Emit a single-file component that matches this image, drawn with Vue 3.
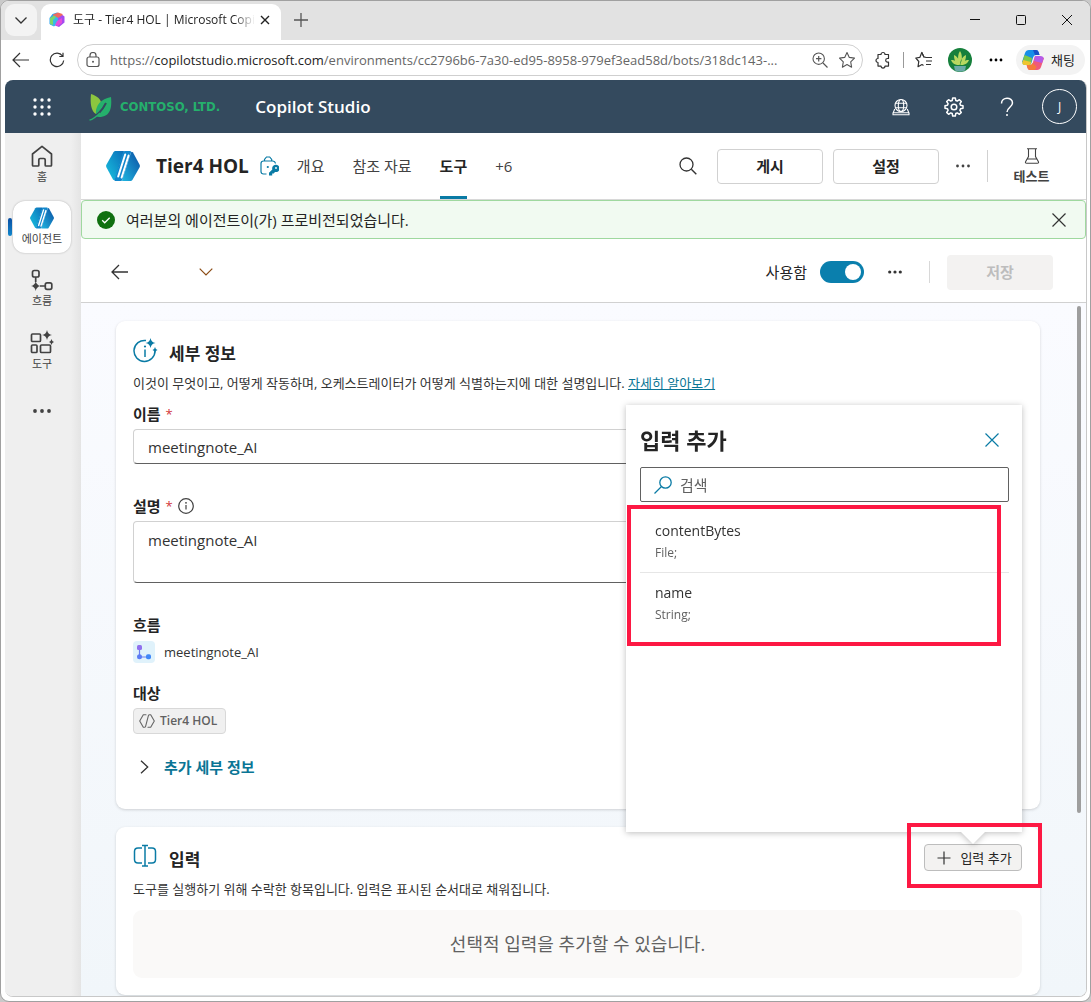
<script setup>
import { ref } from 'vue'

const name = ref('meetingnote_AI')
const description = ref('meetingnote_AI')
const enabled = ref(true)
const query = ref('')

const tabs = [
  { label: '개요' },
  { label: '참조 자료' },
  { label: '도구', active: true },
  { label: '+6' },
]

const inputs = [
  { name: 'contentBytes', type: 'File;' },
  { name: 'name', type: 'String;' },
]
</script>

<template>
  <div class="window">
    <svg class="defs" width="0" height="0" aria-hidden="true">
      <defs>
        <linearGradient id="agentLeft" x1="0" y1="1" x2="1" y2="0">
          <stop offset="0" stop-color="#19c3e0" />
          <stop offset="1" stop-color="#0a6cb8" />
        </linearGradient>
        <linearGradient id="agentRight" x1="0" y1="1" x2="1" y2="0">
          <stop offset="0" stop-color="#1fb6e0" />
          <stop offset="1" stop-color="#0a4fa3" />
        </linearGradient>
        <symbol id="agent" viewBox="0 0 34 30">
          <path d="M9.500 0H18L9 28.500Q8.500 30 7 28.500L.500 16.500Q-.3 15 .500 13.500L7.500 1.200Q8.200 0 9.500 0Z" fill="url(#agentLeft)" />
          <path d="M16 30L25 1.500Q25.600 0 27 1.500L33.500 13.500Q34.300 15 33.500 16.500L26.500 28.800Q25.800 30 24.500 30Z" fill="url(#agentRight)" />
          <path d="M18.500 0H24Q25.500 0 25 1.500L16.500 28.500Q16 30 14.500 30H9.500Q8 30 8.600 28.500L17 1.200Z" fill="#1187cc" />
          <path d="M19.200 3.500L12.200 25.500M22.600 4.500L15.600 26.500" stroke="#fff" stroke-width="2" stroke-linecap="round" fill="none" />
        </symbol>
      </defs>
    </svg>

    <div class="tabstrip">
      <button class="tab-menu" aria-label="탭 작업 메뉴">
        <svg width="14" height="14" viewBox="0 0 14 14"><path d="M1.500 4.500L7 10l5.500-5.500" fill="none" stroke="#333" stroke-width="1.300" /></svg>
      </button>
      <div class="tab">
        <svg width="16" height="16" viewBox="0 0 16 16">
          <path d="M3.500 2L8 .5l3 1.500v7L5 14l-4.500-2V6z" fill="#2fa4f0" />
          <path d="M4 2.500L9 .5l4.500 1.500v5L9 9 4 6z" fill="#f06a60" />
          <path d="M1 6l4-2.500L9 6v5l-4 3.500-4-2z" fill="#39b8e8" />
          <path d="M1 6l4-2.500 2 1.500-3 3v5L1 12z" fill="#7cd66b" />
          <path d="M9 6l4.500-3 2 1.500v6L10 15l-4-1.500 3-3z" fill="#a44bf0" />
          <path d="M8 9l5-3v5l-4 3-3-1z" fill="#e24ddb" />
        </svg>
        <span class="tab-title">도구 - Tier4 HOL | Microsoft Copilot</span>
        <button class="tab-close" aria-label="탭 닫기">
          <svg width="10" height="10" viewBox="0 0 10 10"><path d="M1 1l8 8M9 1L1 9" stroke="#222" stroke-width="1.400" /></svg>
        </button>
      </div>
      <button class="new-tab" aria-label="새 탭">
        <svg width="16" height="16" viewBox="0 0 16 16"><path d="M8 1v14M1 8h14" stroke="#555" stroke-width="1.300" /></svg>
      </button>
      <div class="win-controls">
        <button aria-label="최소화"><svg width="10" height="10" viewBox="0 0 10 10"><path d="M0 4.500h10" stroke="#111" /></svg></button>
        <button aria-label="최대화"><svg width="10" height="10" viewBox="0 0 10 10"><rect x=".5" y=".5" width="9" height="9" rx="1" fill="none" stroke="#111" /></svg></button>
        <button aria-label="닫기"><svg width="10" height="10" viewBox="0 0 10 10"><path d="M0 0l10 10M10 0L0 10" stroke="#111" /></svg></button>
      </div>
    </div>

    <div class="toolbar">
      <button aria-label="뒤로"><svg width="18" height="16" viewBox="0 0 18 16"><path d="M17 8H1M8 1L1 8l7 7" fill="none" stroke="#333" stroke-width="1.200" /></svg></button>
      <button aria-label="새로 고침"><svg width="16" height="16" viewBox="0 0 16 16"><path d="M13.500 4A6.700 6.700 0 1 0 14.700 8.500M14 .8V4.500H10.300" fill="none" stroke="#333" stroke-width="1.200" /></svg></button>
      <div class="address">
        <svg width="14" height="16" viewBox="0 0 14 16"><rect x="1" y="5" width="12" height="9.500" rx="2" fill="none" stroke="#555" stroke-width="1.200" /><path d="M4 5V3.500a3 3 0 0 1 6 0V5" fill="none" stroke="#555" stroke-width="1.200" /><circle cx="7" cy="9.800" r="1" fill="#555" /></svg>
        <span class="url"><span>https://</span><b>copilotstudio.microsoft.com</b><span>/environments/cc2796b6-7a30-ed95-8958-979ef3ead58d/bots/318dc143-...</span></span>
        <svg width="16" height="16" viewBox="0 0 16 16"><circle cx="6.700" cy="6.700" r="5.700" fill="none" stroke="#555" stroke-width="1.100" /><path d="M11 11l4.500 4.500M4 6.700h5.400M6.700 4v5.400" stroke="#555" stroke-width="1.200" /></svg>
        <svg width="18" height="18" viewBox="0 0 18 18"><path d="M9 1.500l2.300 4.900 5.200.7-3.800 3.700.9 5.400L9 13.600l-4.600 2.600.9-5.400L1.500 7.100l5.200-.7z" fill="none" stroke="#555" stroke-width="1.100" stroke-linejoin="round" /></svg>
      </div>
      <button class="puzzle" aria-label="확장"><svg width="16" height="18" viewBox="0 0 16 18"><path d="M3 3.500h3a2 2 0 0 1 4 0h3.500v4h-1a1.800 1.800 0 0 0 0 3.600h1v4H10a2 2 0 0 1-4 0H3V11.500a2 2 0 0 1 0-4z" fill="none" stroke="#333" stroke-width="1.200" stroke-linejoin="round" /></svg></button>
      <i class="bar-divider"></i>
      <button class="favs" aria-label="즐겨찾기"><svg width="18" height="18" viewBox="0 0 18 18"><path d="M11 6.400L9 6l-2.200-4.500L4.800 6.400.8 7l3 3.500-.8 5.200 4-2.200 1.500 1" fill="none" stroke="#333" stroke-width="1.200" stroke-linejoin="round" /><path d="M6.800 1.500L9 6.300M11 6.500h6M11 10h6M11 13.500h5" stroke="#333" stroke-width="1.200" /></svg></button>
      <svg class="profile" width="24" height="24" viewBox="0 0 24 24"><circle cx="12" cy="12" r="12" fill="#16803c" /><path d="M12 17C9 11 10 6 12 3c2 3 3 8 0 14zM12 17C7 15 6 11 6 7c4 2 6 6 6 10zM12 17c5-2 6-6 6-10-4 2-6 6-6 10zM11 17c-4 0-7-2-8-5 4 0 7 2 8 5zM13 17c4 0 7-2 8-5-4 0-7 2-8 5z" fill="#b7d860" /><path d="M6 18h12l-1 4.500a12 12 0 0 1-10 0z" fill="#6aaaa8" /></svg>
      <button class="more" aria-label="설정 및 기타"><svg width="14" height="4" viewBox="0 0 14 4"><circle cx="2" cy="2" r="1.400" /><circle cx="7" cy="2" r="1.400" /><circle cx="12" cy="2" r="1.400" /></svg></button>
      <button class="chat">
        <svg width="22" height="20" viewBox="0 0 22 20">
          <path d="M7 0h7q2 0 2.600 2L17.500 5H14q-2 0-2.700 2L9 14H5L0 12 3 3Q4 0 7 0z" fill="#168fe8" />
          <path d="M2.500 5L10 8 9 14q-.5 1-2 1H3Q0 15 .5 12z" fill="#7cc84a" />
          <path d="M1 10l8 2-.5 2q-.5 1-2 1H3q-3 0-2.500-3z" fill="#efc52f" />
          <path d="M15 20H8q-2 0-2.500-2L4.500 15H8q2 0 2.700-2L13 6h4l5 2-3 9q-1 3-4 3z" fill="#f0597a" />
          <path d="M13 6h5q4 0 3.500 3L20 13l-8-2z" fill="#b55be8" />
          <path d="M5 15h3q2 0 2.700-2l4 4-2 3H8q-2 0-2.500-2z" fill="#f47a3c" />
          <path d="M11 0h3q2 0 2.600 2L17.500 5H13z" fill="#1850c8" />
        </svg>
        채팅
      </button>
    </div>

    <div class="app">
      <header class="suite">
        <button class="waffle" aria-label="앱 시작 관리자">
          <svg width="18" height="18" viewBox="0 0 18 18" fill="#fff"><g v-for="r in 3" :key="r"><circle v-for="c in 3" :key="c" :cx="c * 7 - 5" :cy="r * 7 - 5" r="1.700" /></g></svg>
        </button>
        <a href="#" class="brand">
          <svg width="23" height="28" viewBox="0 0 23 28"><path d="M2 1c6 2 10 5 10 9-3 3-5 6-5 11C2 18 1 10 2 1z" fill="#8cc63f" /><path d="M22 4c1 10 0 20-12 20-2 0-3-1-3-2C6 12 12 6 22 4z" fill="#25b06c" /><path d="M17 10C14 16 8 23 .5 27" fill="none" stroke="#344a5e" stroke-width="2" /><path d="M11 20C8 23 5 26 .5 27.200" fill="none" stroke="#25b06c" stroke-width="1.300" /></svg>
          <span>CONTOSO, LTD.</span>
        </a>
        <h1>Copilot Studio</h1>
        <nav class="suite-actions">
          <button aria-label="환경"><svg width="18" height="18" viewBox="0 0 18 18" fill="none" stroke="#fff" stroke-width="1.100"><circle cx="9" cy="7.500" r="6" /><ellipse cx="9" cy="7.500" rx="2.700" ry="6" /><path d="M3.500 5.300h11M3.500 9.700h11" /><path d="M2.800 11L1 15v1.800h16V15l-1.800-4M1 14.800h16" /></svg></button>
          <button aria-label="설정"><svg width="20" height="20" viewBox="0 0 20 20" fill="none" stroke="#fff" stroke-width="1.500" stroke-linejoin="round"><path d="M8.700 1h2.600l.5 2.500 1.500.6 2.100-1.400 1.900 1.900-1.400 2.100.6 1.500 2.500.5v2.600l-2.500.5-.6 1.500 1.400 2.100-1.900 1.900-2.100-1.400-1.500.6-.5 2.500H8.700l-.5-2.500-1.500-.6-2.100 1.400-1.900-1.900 1.400-2.100-.6-1.500L1 11.300V8.700l2.500-.5.6-1.500-1.400-2.100 1.900-1.900 2.100 1.400 1.500-.6z" /><circle cx="10" cy="10" r="2.800" /></svg></button>
          <button aria-label="도움말"><svg width="14" height="20" viewBox="0 0 14 20" fill="none" stroke="#fff" stroke-width="1.500"><path d="M1.500 6.500C1.500-.5 12.500-.5 12.500 6c0 4-5.500 4.500-5.500 9M7 17v2" /></svg></button>
          <button class="avatar">J</button>
        </nav>
      </header>

      <div class="body">
        <nav class="rail">
          <a href="#" class="rail-item">
            <svg width="22" height="22" viewBox="0 0 22 22"><path d="M1.500 9L11 1.300 20.500 9v11.200q0 .8-.8.8H15q-.8 0-.8-.8v-5.400q0-1.300-1.300-1.300H9.100q-1.300 0-1.300 1.300v5.400q0 .8-.8.8H2.300q-.8 0-.8-.8z" fill="none" stroke="#424242" stroke-width="1.700" stroke-linejoin="round" /></svg>
            <span>홈</span>
          </a>
          <a href="#" class="rail-item current">
            <svg width="24" height="22"><use href="#agent" /></svg>
            <span>에이전트</span>
          </a>
          <a href="#" class="rail-item">
            <svg width="22" height="22" viewBox="0 0 22 22"><g fill="none" stroke="#424242" stroke-width="1.700"><rect x="1.500" y="1.500" width="6.500" height="6.500" rx="1.800" /><rect x="14.300" y="13.800" width="6.500" height="6.500" rx="1.800" /><path d="M4.700 8v5M9 17h5" /></g><path d="M4.700 12q.8 4.200 4.800 5-4 .8-4.800 5Q4 17.800 0 17q4-.8 4.700-5z" fill="#424242" /></svg>
            <span>흐름</span>
          </a>
          <a href="#" class="rail-item">
            <svg width="24" height="24" viewBox="0 0 24 24"><g fill="none" stroke="#424242" stroke-width="1.700"><rect x="1.500" y="4" width="9" height="7.500" rx="1" /><rect x="1.500" y="15" width="5.500" height="7.500" rx="1" /><rect x="10.500" y="15" width="10" height="7.500" rx="1" /></g><path d="M17 0q.8 4.500 5 5-4.200.6-5 5-.8-4.400-5-5 4.200-.5 5-5zM21.500 9q.5 2.500 2.500 3-2 .5-2.500 3-.5-2.500-2.500-3 2-.5 2.500-3z" fill="#424242" /></svg>
            <span>도구</span>
          </a>
          <button class="rail-more" aria-label="더 보기"><svg width="18" height="4" viewBox="0 0 18 4" fill="#424242"><circle cx="2" cy="2" r="1.900" /><circle cx="9" cy="2" r="1.900" /><circle cx="16" cy="2" r="1.900" /></svg></button>
        </nav>

        <main class="main">
          <div class="agent-bar">
            <svg width="34" height="30"><use href="#agent" /></svg>
            <h2>Tier4 HOL</h2>
            <svg class="lock" width="19" height="20" viewBox="0 0 19 20"><path d="M6.500 18H3.500Q1 18 1 15.500v-8Q1 5 3.500 5h9Q15 5 15.500 7.500M4.500 5V3.500L6.500 1h3.200l2 2.500V5" fill="none" stroke="#0a7ba5" stroke-width="1.200" /><circle cx="7.800" cy="11" r="1.100" fill="#0a7ba5" /><path d="M9 19.500v-2.800l3.300-3.300a3.700 3.700 0 1 1 2.700 2.600l-1.300 1.400-1.500.1v2z" fill="#0a7ba5" /><circle cx="16" cy="12" r=".9" fill="#fff" /></svg>
            <nav class="tabs">
              <a v-for="t in tabs" :key="t.label" href="#" :class="{ active: t.active }">{{ t.label }}</a>
            </nav>
            <div class="agent-actions">
              <button class="find" aria-label="검색"><svg width="18" height="18" viewBox="0 0 18 18"><circle cx="7.500" cy="7.500" r="6.500" fill="none" stroke="#333" stroke-width="1.300" /><path d="M12.300 12.300l5 5" stroke="#333" stroke-width="1.400" /></svg></button>
              <button class="outlined">게시</button>
              <button class="outlined">설정</button>
              <button class="dots" aria-label="더 보기"><svg width="14" height="4" viewBox="0 0 14 4" fill="#424242"><circle cx="1.500" cy="2" r="1.400" /><circle cx="7" cy="2" r="1.400" /><circle cx="12.500" cy="2" r="1.400" /></svg></button>
              <button class="test">
                <svg width="16" height="16" viewBox="0 0 16 16"><path d="M3 .7h10M4.500 1v7.500L1.700 13.500q-.9 1.800 1 1.800h10.600q1.900 0 1-1.800L11.500 8.500V1M3.500 11h9" fill="none" stroke="#424242" stroke-width="1.100" /></svg>
                <span>테스트</span>
              </button>
            </div>
          </div>

          <div class="banner" role="status">
            <svg width="18" height="18" viewBox="0 0 18 18"><circle cx="9" cy="9" r="9" fill="#107010" /><path d="M5.200 9.300l2.500 2.500 5-5" fill="none" stroke="#fff" stroke-width="1.300" /></svg>
            <span>여러분의 에이전트이(가) 프로비전되었습니다.</span>
            <button aria-label="닫기"><svg width="14" height="14" viewBox="0 0 14 14"><path d="M.5.5l13 13M13.500.5l-13 13" stroke="#333" stroke-width="1.200" /></svg></button>
          </div>

          <div class="tool-bar">
            <button aria-label="뒤로"><svg width="17" height="16" viewBox="0 0 17 16"><path d="M17 8H1M8 1L1 8l7 7" fill="none" stroke="#333" stroke-width="1.300" /></svg></button>
            <button class="picker" aria-label="도구 선택"><svg width="14" height="8" viewBox="0 0 14 8"><path d="M.7.7L7 7 13.300.7" fill="none" stroke="#8a4b14" stroke-width="1.200" /></svg></button>
            <label class="switch">사용함<input v-model="enabled" type="checkbox" role="switch" /></label>
            <button class="tool-dots" aria-label="더 보기"><svg width="14" height="4" viewBox="0 0 14 4" fill="#333"><circle cx="1.700" cy="2" r="1.600" /><circle cx="7" cy="2" r="1.600" /><circle cx="12.300" cy="2" r="1.600" /></svg></button>
            <i class="tool-divider"></i>
            <button class="save" disabled>저장</button>
          </div>

          <div class="content">
            <section class="card">
              <div class="card-head">
                <svg width="25" height="25" viewBox="0 0 25 25"><path d="M13 2.500A10.500 10.500 0 1 0 22 12.500" fill="none" stroke="#0a7ba5" stroke-width="1.500" /><path d="M12 11.500v7.500" stroke="#0a7ba5" stroke-width="1.500" /><circle cx="12" cy="8.500" r="1.100" fill="#0a7ba5" /><path d="M17.500 0q.8 4.500 5 5-4.200.6-5 5-.8-4.400-5-5 4.200-.5 5-5zM22 9q.5 2.500 2.500 3-2 .5-2.500 3-.5-2.500-2.500-3 2-.5 2.500-3z" fill="#0a7ba5" /></svg>
                <h3>세부 정보</h3>
              </div>
              <p class="desc">이것이 무엇이고, 어떻게 작동하며, 오케스트레이터가 어떻게 식별하는지에 대한 설명입니다. <a href="#">자세히 알아보기</a></p>

              <label class="label" for="tool-name">이름 <em>*</em></label>
              <input id="tool-name" v-model="name" class="field" type="text" />

              <label class="label gap-l" for="tool-desc">설명 <em>*</em>
                <svg width="16" height="16" viewBox="0 0 16 16"><circle cx="8" cy="8" r="7.300" fill="none" stroke="#424242" stroke-width="1.200" /><path d="M8 7v4.500" stroke="#424242" stroke-width="1.200" /><circle cx="8" cy="4.800" r=".9" fill="#424242" /></svg>
              </label>
              <textarea id="tool-desc" v-model="description" class="field area"></textarea>

              <h4 class="label gap-l">흐름</h4>
              <div class="flow">
                <svg width="22" height="22" viewBox="0 0 22 22"><rect width="22" height="22" rx="4" fill="#e0f2fb" /><path d="M6.500 6v10H16" fill="none" stroke="#6b7cf0" stroke-width="1.200" /><rect x="4" y="4" width="5" height="5" rx="1.500" fill="#9070ee" /><circle cx="6.500" cy="15.700" r="2.500" fill="#5b7cf5" /><rect x="13" y="13.200" width="5" height="5" rx="1.800" fill="#4088f8" /></svg>
                <span>meetingnote_AI</span>
              </div>

              <h4 class="label gap-m">대상</h4>
              <span class="tag">
                <svg width="16" height="14" viewBox="0 0 16 14" fill="none" stroke="#666" stroke-width="1.100" stroke-linejoin="round" stroke-linecap="round"><path d="M7 .7H4.300L.7 7l3.600 6.300H5.500Q6.300 13.300 6.600 12.300L9.400 1.700Q9.700.7 10.500.7H11.700L15.300 7l-3.600 6.300H9" /></svg>
                Tier4 HOL
              </span>

              <button class="disclosure">
                <svg width="9" height="14" viewBox="0 0 9 14"><path d="M1 .7L7.700 7 1 13.300" fill="none" stroke="#333" stroke-width="1.300" /></svg>
                추가 세부 정보
              </button>
            </section>

            <section class="card inputs">
              <div class="card-head">
                <svg width="25" height="24" viewBox="0 0 25 24" fill="none" stroke="#0a7ba5" stroke-width="1.500"><path d="M9 4H5Q1.500 4 1.500 7.500v8Q1.500 19 5 19h4M15 4h4q3.500 0 3.500 3.500v8Q22.500 19 19 19h-4M12 1.500v20.500M9 1.500h6M9 22h6" /></svg>
                <h3>입력</h3>
                <div class="add-wrap">
                  <button class="add">
                    <svg width="14" height="14" viewBox="0 0 14 14"><path d="M7 .5v13M.5 7h13" stroke="#333" stroke-width="1.200" /></svg>
                    입력 추가
                  </button>
                  <div class="callout" role="dialog" aria-labelledby="callout-title">
                    <div class="callout-head">
                      <h3 id="callout-title">입력 추가</h3>
                      <button aria-label="닫기"><svg width="14" height="14" viewBox="0 0 14 14"><path d="M.5.5l13 13M13.500.5l-13 13" stroke="#0a7ba5" stroke-width="1.200" /></svg></button>
                    </div>
                    <div class="search">
                      <svg width="18" height="18" viewBox="0 0 18 18"><circle cx="11.500" cy="6.500" r="5.700" fill="none" stroke="#0a7ba5" stroke-width="1.300" /><path d="M7.500 10.500L.5 17.500" stroke="#0a7ba5" stroke-width="1.300" /></svg>
                      <input v-model="query" type="text" placeholder="검색" aria-label="검색" />
                    </div>
                    <ul>
                      <li v-for="i in inputs" :key="i.name">
                        <button><strong>{{ i.name }}</strong><small>{{ i.type }}</small></button>
                      </li>
                    </ul>
                    <div class="mark list-mark"></div>
                  </div>
                  <div class="mark add-mark"></div>
                </div>
              </div>
              <p class="desc">도구를 실행하기 위해 수락한 항목입니다. 입력은 표시된 순서대로 채워집니다.</p>
              <div class="empty">선택적 입력을 추가할 수 있습니다.</div>
            </section>
            <div class="thumb"></div>
          </div>
        </main>
      </div>
    </div>
  </div>
</template>

<style>
body {
  background: #c9c9c9;
}
</style>

<style scoped>
* {
  box-sizing: border-box;
}
.window {
  display: flex;
  flex-direction: column;
  min-height: 100vh;
  border: 1px solid #a0a0a0;
  border-radius: 9px;
  background: #fff;
  color: #242424;
  font: 15px/20px "Open Sans", "Noto Sans CJK KR", sans-serif;
  overflow: hidden;
}
.defs {
  position: absolute;
}
svg {
  display: block;
  flex: none;
}
h1, h2, h3, h4, p, ul {
  margin: 0;
  padding: 0;
  font-weight: 600;
}
button {
  display: flex;
  align-items: center;
  justify-content: center;
  flex: none;
  margin: 0;
  padding: 0;
  border: 0;
  background: none;
  color: inherit;
  font: inherit;
}
a {
  color: inherit;
  text-decoration: none;
}

/* browser chrome */
.tabstrip {
  display: flex;
  align-items: flex-start;
  height: 39px;
  padding: 3px 0 0 4px;
  background: #e2e2e2;
}
.tab-menu {
  width: 32px;
  height: 32px;
  border-radius: 9px;
  background: #f3f3f3;
}
.tab {
  display: flex;
  align-items: center;
  width: 240px;
  height: 36px;
  margin-left: 4px;
  padding: 0 7px 4px 8px;
  border-radius: 9px 9px 0 0;
  background: #fff;
}
.tab-title {
  flex: 1;
  margin-left: 8px;
  overflow: hidden;
  white-space: nowrap;
  font-size: 12px;
  mask-image: linear-gradient(to left, transparent 1px, #000 22px);
}
.tab-close {
  width: 18px;
  height: 18px;
}
.new-tab {
  width: 40px;
  height: 32px;
}
.win-controls {
  display: flex;
  margin-left: auto;
}
.win-controls button {
  width: 46px;
  height: 32px;
}
.toolbar {
  display: flex;
  align-items: center;
  height: 40px;
  padding: 0 5px 0 2px;
}
.toolbar > button:not(.chat) {
  width: 36px;
  height: 32px;
}
.address {
  display: flex;
  align-items: center;
  gap: 10px;
  flex: 1;
  min-width: 0;
  height: 32px;
  margin-left: 2px;
  padding: 0 6px 0 8px;
  border: 1px solid #cfcfcf;
  border-radius: 16px;
}
.url {
  flex: 1;
  overflow: hidden;
  white-space: nowrap;
  color: #666;
  font-size: 13px;
}
.url b {
  color: #222;
  font-weight: 400;
}
.toolbar .puzzle {
  margin-left: 2px;
}
.bar-divider {
  width: 1px;
  height: 16px;
  margin: 0 2px;
  background: #999;
}
.profile {
  margin: 0 6px;
}
.more {
  margin-right: 2px;
}
.chat {
  gap: 7px;
  height: 30px;
  padding: 0 10px 0 6px;
  border-radius: 15px;
  background: #f3f3f3;
  font-size: 13px;
}

/* application shell */
.app {
  display: flex;
  flex-direction: column;
  flex: 1;
  margin: 0 3px 4px 4px;
  border: solid #c8c8c8;
  border-width: 0 1px 1px 0;
  border-radius: 8px;
  overflow: hidden;
}
.suite {
  display: flex;
  align-items: center;
  height: 53px;
  padding: 0 9px 0 19px;
  background: #344a5e;
  color: #fff;
}
.waffle {
  width: 36px;
  height: 36px;
}
.brand {
  display: flex;
  align-items: center;
  gap: 8px;
  margin-left: 29px;
  color: #25b06c;
  font: 700 13px/24px "DejaVu Sans Condensed", "Open Sans", sans-serif;
}
.brand span {
  white-space: nowrap;
}
.suite h1 {
  margin-left: 35px;
  font-size: 17px;
}
.suite-actions {
  display: flex;
  align-items: center;
  margin-left: auto;
}
.suite-actions button {
  width: 53px;
  height: 36px;
}
.suite-actions .avatar {
  width: 35px;
  height: 35px;
  margin-left: 9px;
  border: 1px solid #fff;
  border-radius: 50%;
  font-size: 12px;
}
.body {
  display: flex;
  flex: 1;
}
.rail {
  display: flex;
  flex-direction: column;
  align-items: center;
  gap: 10px;
  flex: none;
  width: 76px;
  padding: 6px 2px 0 0;
  background: linear-gradient(to right, #efefef 66px, #e4e4e4);
}
.rail-item {
  display: flex;
  flex-direction: column;
  align-items: center;
  justify-content: center;
  gap: 2px;
  position: relative;
  width: 58px;
  height: 52px;
  border-radius: 12px;
  color: #424242;
  font-size: 11px;
  line-height: 16px;
  white-space: nowrap;
}
.rail-item.current {
  background: #fff;
  box-shadow: 0 0 2px #aaa;
}
.rail-item.current::before {
  content: "";
  position: absolute;
  left: -5px;
  width: 4px;
  height: 18px;
  border-radius: 2px;
  background: linear-gradient(#0a4fa3, #1187cc);
}
.rail-more {
  width: 40px;
  height: 24px;
  margin-top: 12px;
}
.main {
  display: flex;
  flex-direction: column;
  flex: 1;
  min-width: 0;
}
.agent-bar {
  display: flex;
  align-items: center;
  height: 67px;
  padding-left: 25px;
  border-bottom: 1px solid #d8d8d8;
}
.agent-bar h2 {
  margin-left: 16px;
  font-size: 19px;
  font-weight: 700;
}
.lock {
  margin-left: 11px;
}
.tabs {
  display: flex;
  gap: 28px;
  align-self: stretch;
  margin-left: 18px;
}
.tabs a {
  display: flex;
  align-items: center;
  border-bottom: 3px solid transparent;
  border-top: 3px solid transparent;
  color: #424242;
}
.tabs a.active {
  border-bottom-color: #0a7ba5;
  color: #242424;
  font-weight: 700;
}
.agent-actions {
  display: flex;
  align-items: center;
  margin-left: auto;
  padding-right: 11px;
}
.find {
  width: 32px;
  height: 32px;
  margin-right: 13px;
}
.outlined {
  width: 106px;
  height: 35px;
  margin-right: 10px;
  border: 1px solid #d1d1d1;
  border-radius: 4px;
  background: #fff;
  font-weight: 700;
}
.dots {
  width: 28px;
  height: 32px;
}
.test {
  flex-direction: column;
  gap: 4px;
  width: 88px;
  height: 32px;
  margin-left: 10px;
  border-left: 1px solid #d1d1d1;
  color: #424242;
  font-size: 13px;
  font-weight: 600;
  line-height: 16px;
}
.banner {
  display: flex;
  align-items: center;
  gap: 11px;
  height: 39px;
  padding: 0 19px 0 15px;
  border: 1px solid #9fd89f;
  border-radius: 4px;
  background: #f1faf1;
}
.banner button {
  margin-left: auto;
}
.tool-bar {
  display: flex;
  align-items: center;
  height: 64px;
  padding: 3px 33px 0 30px;
  border-bottom: 1px solid #d1d1d1;
}
.picker {
  margin-left: 71px;
}
.switch {
  display: flex;
  align-items: center;
  gap: 13px;
  margin-left: auto;
}
.switch input {
  appearance: none;
  width: 44px;
  height: 22px;
  margin: 0;
  padding: 3px;
  border-radius: 11px;
  background: #0a7fad;
}
.switch input::before {
  content: "";
  display: block;
  width: 16px;
  height: 16px;
  margin-left: 22px;
  border-radius: 50%;
  background: #fff;
}
.tool-dots {
  width: 34px;
  height: 32px;
  margin-left: 14px;
}
.tool-divider {
  width: 1px;
  height: 22px;
  margin: 0 17px;
  background: #d8d8d8;
}
.save {
  width: 106px;
  height: 35px;
  border-radius: 4px;
  background: #f3f2f1;
  color: #bdbdbd;
  font-weight: 700;
}

/* cards */
.content {
  position: relative;
  flex: 1;
  display: flex;
  flex-direction: column;
  gap: 18px;
  padding: 18px 46px 1px 35px;
  background: linear-gradient(#fafbff, #f1f6fa);
}
.card {
  display: flex;
  flex-direction: column;
  padding: 17px 18px 17px 17px;
  border-radius: 9px;
  background: #fff;
  box-shadow: 0 1px 3px rgba(0, 0, 0, 0.16);
}
.card-head {
  display: flex;
  align-items: flex-start;
  gap: 11px;
  height: 34px;
}
.card-head h3 {
  font-size: 17px;
  font-weight: 700;
  line-height: 32px;
}
.desc {
  color: #333;
  font-size: 13px;
  font-weight: 400;
  line-height: 22px;
}
.desc a {
  color: #0a7595;
  text-decoration: underline;
}
.label {
  display: flex;
  align-items: center;
  gap: 5px;
  margin: 10px 0 5px;
  font-size: 15px;
  font-weight: 700;
}
.label em {
  color: #d13438;
  font-size: 13px;
  font-style: normal;
  font-weight: 400;
}
.label.gap-m {
  margin-top: 20px;
}
.label.gap-l {
  margin-top: 32px;
}
.field {
  height: 35px;
  padding: 0 14px;
  border: 1px solid #d1d1d1;
  border-bottom-color: #616161;
  border-radius: 4px;
  background: #fff;
  color: #333;
  font: inherit;
}
.area {
  height: 62px;
  padding: 8px 14px;
  resize: none;
}
.flow {
  display: flex;
  align-items: center;
  gap: 9px;
  height: 23px;
  color: #333;
  font-size: 13px;
}
.tag {
  display: flex;
  align-items: center;
  align-self: flex-start;
  gap: 5px;
  height: 26px;
  padding: 0 8px 0 5px;
  border: 1px solid #d8d8d8;
  border-radius: 4px;
  background: #f0f0f0;
  color: #616161;
  font-size: 12px;
  font-weight: 600;
}
.disclosure {
  align-self: flex-start;
  gap: 15px;
  height: 24px;
  margin: 21px 0 13px 7px;
  color: #0a7595;
  font-weight: 700;
}
.empty {
  display: flex;
  align-items: center;
  justify-content: center;
  height: 68px;
  margin-top: 10px;
  border-radius: 9px;
  background: #faf9f8;
  color: #616161;
  font-size: 18px;
}
.add-wrap {
  position: relative;
  margin-left: auto;
}
.add {
  gap: 9px;
  width: 98px;
  height: 27px;
  padding-left: 3px;
  border: 1px solid #bdbdbd;
  border-radius: 4px;
  background: #f3f2f1;
  font-size: 13px;
}
.callout {
  position: absolute;
  z-index: 1;
  right: 0;
  bottom: 39px;
  width: 396px;
  height: 427px;
  padding: 0 13px 0 14px;
  background: #fff;
  filter: drop-shadow(0 1px 3px rgba(0, 0, 0, 0.26));
}
.callout::after {
  content: "";
  position: absolute;
  right: 36px;
  bottom: -12px;
  width: 26px;
  height: 13px;
  background: #fff;
  clip-path: polygon(0 0, 100% 0, 50% 100%);
}
.callout-head {
  display: flex;
  align-items: center;
  justify-content: space-between;
  height: 62px;
  padding: 8px 10px 0 0;
}
.callout-head h3 {
  font-size: 22px;
}
.search {
  display: flex;
  align-items: center;
  gap: 8px;
  height: 35px;
  padding: 0 13px;
  border: 1px solid #616161;
  border-radius: 2px;
}
.search input {
  flex: 1;
  min-width: 0;
  padding: 0;
  border: 0;
  outline: 0;
  font: inherit;
}
.search input::placeholder {
  color: #616161;
}
.callout ul {
  padding-top: 9px;
  list-style: none;
}
.callout li + li {
  border-top: 1px solid #e6e6e6;
}
.callout li button {
  flex-direction: column;
  align-items: flex-start;
  gap: 2px;
  width: 100%;
  height: 61px;
  padding-left: 15px;
}
.callout strong {
  color: #333;
  font-size: 14px;
  font-weight: 400;
}
.callout small {
  color: #616161;
  font-size: 12px;
  font-weight: 400;
}
.mark {
  position: absolute;
  border: 4px solid #fd1843;
  pointer-events: none;
}
.list-mark {
  top: 100px;
  left: 1px;
  width: 374px;
  height: 141px;
}
.add-mark {
  z-index: 2;
  top: -21px;
  right: -20px;
  width: 135px;
  height: 65px;
}
.thumb {
  position: absolute;
  top: 3px;
  right: 5px;
  width: 4px;
  height: 507px;
  border-radius: 2px;
  background: #9e9e9e;
}
</style>
